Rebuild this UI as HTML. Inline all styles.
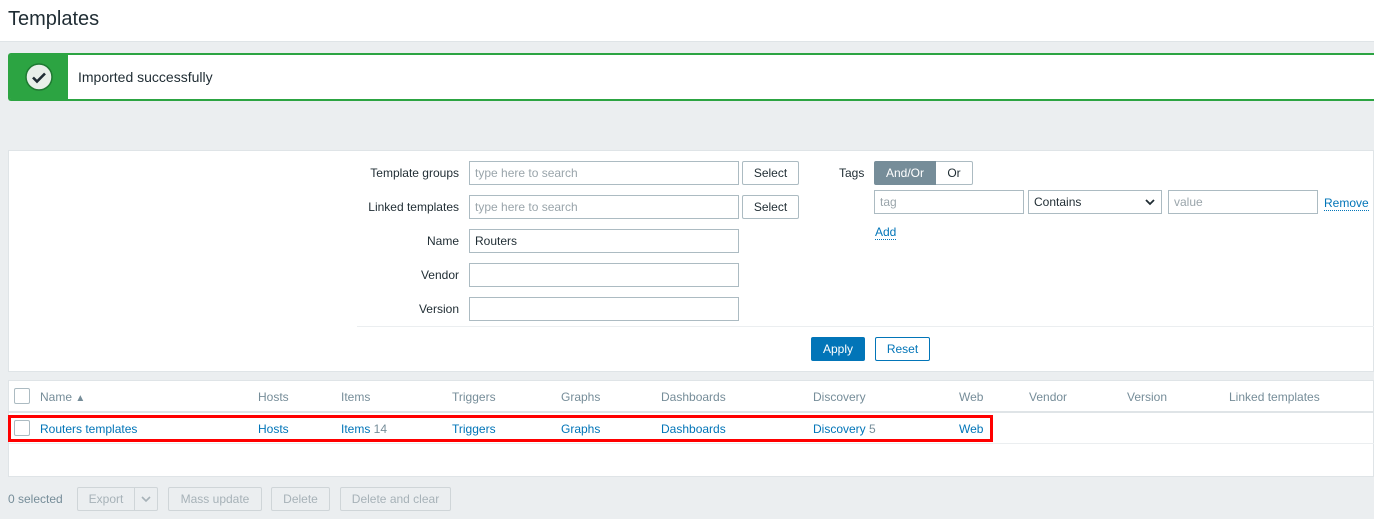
<!DOCTYPE html>
<html><head><meta charset="utf-8"><style>
*{box-sizing:border-box;margin:0;padding:0}
body{width:1374px;height:519px;background:#ebeef0;font-family:"Liberation Sans",sans-serif;font-size:12px;color:#1f2c33;position:relative;overflow:hidden}
.a{position:absolute}
.hdr{left:0;top:0;width:1374px;height:42px;background:#fff;border-bottom:1px solid #dfe4e7}
.hdr h1{position:absolute;left:8px;top:8px;font-size:20px;font-weight:normal;color:#1f2c33}
.msg{left:8px;top:53px;width:1366px;height:48px;background:#fff;border:2px solid #2ca442;border-right:none;border-radius:3px 0 0 3px}
.msg .g{position:absolute;left:0;top:-2px;width:58px;height:48px;background:#2ca442;border-radius:3px 0 0 3px}
.msg .t{position:absolute;left:68px;top:14px;font-size:14px}
.panel{background:#fff;border:1px solid #dfe4e7}
.lbl{text-align:right;width:110px;font-size:12px}
.in{height:24px;border:1px solid #acbbc2;background:#fff;padding:0 5px;line-height:22px;font-size:12px;color:#1f2c33}
.ph{color:#9aa5ab}
.btn{height:24px;border:1px solid #acbbc2;background:#fff;text-align:center;line-height:22px;border-radius:2px}
.lnk{color:#0275b8}
.dot{border-bottom:1px dotted #0275b8}
.th{color:#768d99;top:390px}
.td{color:#0275b8;top:422px}
.cb{width:16px;height:16px;border:1px solid #acbbc2;background:#fff;border-radius:2px}
.dis{height:24px;border:1px solid #cfd5d8;background:#ebeef0;color:#a7b2b8;text-align:center;line-height:22px;border-radius:2px}
</style></head><body>
<div class="a hdr"><h1>Templates</h1></div>
<div class="a msg"><div class="g"><svg style="position:absolute;left:15px;top:10px" width="28" height="28" viewBox="0 0 28 28"><circle cx="14" cy="14" r="13" fill="#e8efe9" stroke="#1e7a31" stroke-width="1.5"/><path d="M8 14.5l4 4 8-8" fill="none" stroke="#1f2c33" stroke-width="2.6"/></svg></div><div class="t">Imported successfully</div></div>

<div class="a panel" style="left:8px;top:150px;width:1366px;height:222px"></div>
<div class="a lbl" style="left:349px;top:166px">Template groups</div>
<div class="a in ph" style="left:469px;top:161px;width:270px">type here to search</div>
<div class="a btn" style="left:742px;top:161px;width:57px">Select</div>
<div class="a lbl" style="left:349px;top:200px">Linked templates</div>
<div class="a in ph" style="left:469px;top:195px;width:270px">type here to search</div>
<div class="a btn" style="left:742px;top:195px;width:57px">Select</div>
<div class="a lbl" style="left:349px;top:234px">Name</div>
<div class="a in" style="left:469px;top:229px;width:270px">Routers</div>
<div class="a lbl" style="left:349px;top:268px">Vendor</div>
<div class="a in" style="left:469px;top:263px;width:270px"></div>
<div class="a lbl" style="left:349px;top:302px">Version</div>
<div class="a in" style="left:469px;top:297px;width:270px"></div>
<div class="a" style="left:357px;top:326px;width:1017px;height:1px;background:#ebeef0"></div>

<div class="a" style="left:839px;top:166px">Tags</div>
<div class="a" style="left:874px;top:161px;width:62px;height:24px;background:#768d99;color:#fff;text-align:center;line-height:24px;border-radius:2px 0 0 2px">And/Or</div>
<div class="a" style="left:936px;top:161px;width:37px;height:24px;border:1px solid #acbbc2;border-left:none;text-align:center;line-height:22px;border-radius:0 2px 2px 0">Or</div>
<div class="a in ph" style="left:874px;top:190px;width:150px">tag</div>
<div class="a in" style="left:1028px;top:190px;width:134px">Contains<svg style="position:absolute;right:6px;top:8px" width="10" height="7" viewBox="0 0 10 7"><path d="M1 1l4 4 4-4" fill="none" stroke="#1f2c33" stroke-width="1.8"/></svg></div>
<div class="a in ph" style="left:1168px;top:190px;width:150px">value</div>
<div class="a lnk dot" style="left:1324px;top:196px">Remove</div>
<div class="a lnk dot" style="left:875px;top:225px">Add</div>

<div class="a" style="left:811px;top:337px;width:54px;height:24px;background:#0275b8;color:#fff;text-align:center;line-height:24px;border-radius:2px">Apply</div>
<div class="a btn" style="left:875px;top:337px;width:55px;border-color:#0275b8;color:#0275b8">Reset</div>

<div class="a panel" style="left:8px;top:380px;width:1366px;height:97px"></div>
<div class="a" style="left:9px;top:411px;width:1365px;height:2px;background:#dfe4e7"></div>
<div class="a" style="left:9px;top:443px;width:1365px;height:1px;background:#ebeef0"></div>
<div class="a cb" style="left:14px;top:388px"></div>
<div class="a th lnk" style="left:40px">Name <span style="color:#768d99;font-size:10px">▲</span></div>
<div class="a th" style="left:258px">Hosts</div>
<div class="a th" style="left:341px">Items</div>
<div class="a th" style="left:452px">Triggers</div>
<div class="a th" style="left:561px">Graphs</div>
<div class="a th" style="left:661px">Dashboards</div>
<div class="a th" style="left:813px">Discovery</div>
<div class="a th" style="left:959px">Web</div>
<div class="a th" style="left:1029px">Vendor</div>
<div class="a th" style="left:1127px">Version</div>
<div class="a th" style="left:1229px">Linked templates</div>

<div class="a" style="left:8px;top:415px;width:985px;height:27px;border:3px solid #f00"></div>
<div class="a cb" style="left:14px;top:420px"></div>
<div class="a td" style="left:40px">Routers templates</div>
<div class="a td" style="left:258px">Hosts</div>
<div class="a td" style="left:341px">Items <span style="color:#768d99">14</span></div>
<div class="a td" style="left:452px">Triggers</div>
<div class="a td" style="left:561px">Graphs</div>
<div class="a td" style="left:661px">Dashboards</div>
<div class="a td" style="left:813px">Discovery <span style="color:#768d99">5</span></div>
<div class="a td" style="left:959px">Web</div>

<div class="a" style="left:8px;top:492px;color:#768d99">0 selected</div>
<div class="a dis" style="left:77px;top:487px;width:58px;border-radius:2px 0 0 2px">Export</div>
<div class="a dis" style="left:134px;top:487px;width:24px;border-radius:0 2px 2px 0"><svg style="position:absolute;left:6px;top:8px" width="10" height="7" viewBox="0 0 10 7"><path d="M1 1l4 4 4-4" fill="none" stroke="#a7b2b8" stroke-width="1.6"/></svg></div>
<div class="a dis" style="left:168px;top:487px;width:94px">Mass update</div>
<div class="a dis" style="left:271px;top:487px;width:59px">Delete</div>
<div class="a dis" style="left:340px;top:487px;width:111px">Delete and clear</div>
</body></html>
